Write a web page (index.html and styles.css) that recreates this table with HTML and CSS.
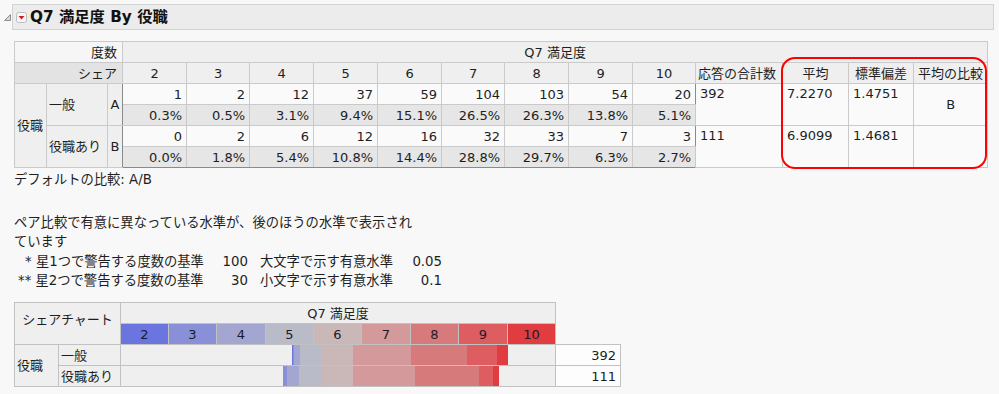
FILE: index.html
```html
<!DOCTYPE html>
<html lang="ja">
<head>
<meta charset="utf-8">
<title>Q7 満足度 By 役職</title>
<link rel="stylesheet" href="styles.css">
</head>
<body>
<div class="titlerow">
  <svg class="disc" width="9" height="9" viewBox="0 0 9 9"><polygon points="7.5,1.5 7.5,7.5 1.5,7.5" fill="#d6d6d6" stroke="#8e8e8e" stroke-width="1"/></svg>
  <div class="titlebox">
    <svg class="menu-icon" width="11" height="11" viewBox="0 0 11 11"><rect x="0.5" y="0.5" width="10" height="10" rx="2" fill="#f6f6f6" stroke="#bdbdbd"/><polygon points="2.5,4 8.5,4 5.5,7.5" fill="#e0141e"/></svg>
    <span class="title">Q7 満足度 By 役職</span>
  </div>
</div>

<div class="content">
  <div class="ct-wrap">
    <table class="ct">
      <colgroup>
        <col style="width:32px"><col style="width:61px"><col style="width:15px">
        <col style="width:64px"><col style="width:63px"><col style="width:64px"><col style="width:64px"><col style="width:64px"><col style="width:63px"><col style="width:64px"><col style="width:64px"><col style="width:63px">
        <col style="width:87px"><col style="width:66px"><col style="width:65px"><col style="width:74px">
      </colgroup>
      <tr>
        <td colspan="3" class="hl light">度数</td>
        <td colspan="13" class="span">Q7 満足度</td>
      </tr>
      <tr>
        <td colspan="3" class="hl dark">シェア</td>
        <td class="ch">2</td><td class="ch">3</td><td class="ch">4</td><td class="ch">5</td><td class="ch">6</td><td class="ch">7</td><td class="ch">8</td><td class="ch">9</td><td class="ch">10</td>
        <td class="ch lft">応答の合計数</td><td class="ch">平均</td><td class="ch">標準偏差</td><td class="ch">平均の比較</td>
      </tr>
      <tr>
        <td rowspan="4" class="rl">役職</td>
        <td rowspan="2" class="rl">一般</td>
        <td rowspan="2" class="rl ab">A</td>
        <td class="n cnt dl">1</td><td class="n cnt">2</td><td class="n cnt">12</td><td class="n cnt">37</td><td class="n cnt">59</td><td class="n cnt">104</td><td class="n cnt">103</td><td class="n cnt">54</td><td class="n cnt dr">20</td>
        <td rowspan="2" class="tl">392</td><td rowspan="2" class="tl">7.2270</td><td rowspan="2" class="tl">1.4751</td><td rowspan="2" class="mid">B</td>
      </tr>
      <tr>
        <td class="n pct dl">0.3%</td><td class="n pct">0.5%</td><td class="n pct">3.1%</td><td class="n pct">9.4%</td><td class="n pct">15.1%</td><td class="n pct">26.5%</td><td class="n pct">26.3%</td><td class="n pct">13.8%</td><td class="n pct dr">5.1%</td>
      </tr>
      <tr>
        <td rowspan="2" class="rl">役職あり</td>
        <td rowspan="2" class="rl ab">B</td>
        <td class="n cnt dl">0</td><td class="n cnt">2</td><td class="n cnt">6</td><td class="n cnt">12</td><td class="n cnt">16</td><td class="n cnt">32</td><td class="n cnt">33</td><td class="n cnt">7</td><td class="n cnt dr">3</td>
        <td rowspan="2" class="tl">111</td><td rowspan="2" class="tl">6.9099</td><td rowspan="2" class="tl">1.4681</td><td rowspan="2" class="mid"></td>
      </tr>
      <tr>
        <td class="n pct dl db">0.0%</td><td class="n pct db">1.8%</td><td class="n pct db">5.4%</td><td class="n pct db">10.8%</td><td class="n pct db">14.4%</td><td class="n pct db">28.8%</td><td class="n pct db">29.7%</td><td class="n pct db">6.3%</td><td class="n pct dr db">2.7%</td>
      </tr>
    </table>
    <div class="highlight"></div>
  </div>

  <p class="default">デフォルトの比較: A/B</p>
  <p class="pair">ペア比較で有意に異なっている水準が、後のほうの水準で表示され<br>ています</p>
  <div class="stars">
    <span class="s1">* 星1つで警告する度数の基準</span><span class="num">100</span><span class="lab">大文字で示す有意水準</span><span class="num">0.05</span>
    <span class="s2">** 星2つで警告する度数の基準</span><span class="num">30</span><span class="lab">小文字で示す有意水準</span><span class="num">0.1</span>
  </div>

  <table class="sc">
    <colgroup>
      <col style="width:44px"><col style="width:62px">
      <col style="width:48px"><col style="width:48px"><col style="width:49px"><col style="width:48px"><col style="width:48px"><col style="width:49px"><col style="width:48px"><col style="width:49px"><col style="width:48px">
      <col style="width:65px">
    </colgroup>
    <tr>
      <td colspan="2" rowspan="2" class="sct">シェアチャート</td>
      <td colspan="9" class="span">Q7 満足度</td>
      <td rowspan="2" class="blank"></td>
    </tr>
    <tr>
      <td class="lv c2">2</td><td class="lv c3">3</td><td class="lv c4">4</td><td class="lv c5">5</td><td class="lv c6">6</td><td class="lv c7">7</td><td class="lv c8">8</td><td class="lv c9">9</td><td class="lv c10">10</td>
    </tr>
    <tr>
      <td rowspan="2" class="rl">役職</td>
      <td class="rl">一般</td>
      <td colspan="9" class="barcell">
        <div class="track"><div class="bar" style="margin-left:171px">
          <span class="c2" style="width:0.3%"></span><span class="c3" style="width:0.5%"></span><span class="c4" style="width:3.1%"></span><span class="c5" style="width:9.4%"></span><span class="c6" style="width:15.1%"></span><span class="c7" style="width:26.5%"></span><span class="c8" style="width:26.3%"></span><span class="c9" style="width:13.8%"></span><span class="c10" style="width:5.0%"></span>
        </div></div>
      </td>
      <td class="tot">392</td>
    </tr>
    <tr>
      <td class="rl">役職あり</td>
      <td colspan="9" class="barcell">
        <div class="track"><div class="bar" style="margin-left:162px">
          <span class="c2" style="width:0%"></span><span class="c3" style="width:1.8%"></span><span class="c4" style="width:5.4%"></span><span class="c5" style="width:10.8%"></span><span class="c6" style="width:14.4%"></span><span class="c7" style="width:28.8%"></span><span class="c8" style="width:29.7%"></span><span class="c9" style="width:6.3%"></span><span class="c10" style="width:2.8%"></span>
        </div></div>
      </td>
      <td class="tot">111</td>
    </tr>
  </table>
</div>
</body>
</html>
```

FILE: styles.css
```css
* { box-sizing: border-box; }
html, body { margin: 0; padding: 0; }
body {
  width: 999px;
  height: 394px;
  overflow: hidden;
  background: #f8f8f8;
  color: #1e1e1e;
  font-family: "DejaVu Sans", "Noto Sans CJK JP", sans-serif;
  font-size: 13px;
}

/* title bar */
.titlerow {
  display: flex;
  align-items: center;
  padding: 4px 5px 0 3px;
}
.disc { flex: none; display: block; }
.titlebox {
  flex: 1;
  height: 26px;
  display: flex;
  align-items: center;
  gap: 3px;
  padding-left: 3px;
  background: #ececec;
  border: 1px solid #d3d3d3;
}
.menu-icon { flex: none; display: block; }
.title {
  font-weight: bold;
  font-size: 15.3px;
  line-height: 20px;
  color: #111;
}

.content { padding-left: 14px; }

/* main contingency table */
.ct-wrap {
  position: relative;
  width: 973px;
  margin-top: 11px;
}
.ct {
  border-collapse: collapse;
  table-layout: fixed;
  width: 973px;
}
.ct td {
  border: 1px solid #cacaca;
  height: 21px;
  padding: 0 4px;
  line-height: 19px;
  white-space: nowrap;
  overflow: hidden;
}
.ct .hl { text-align: right; padding-right: 5px; }
.ct .light { background: #f6f6f6; }
.ct .dark { background: #e3e3e3; }
.ct .span { background: #efefef; text-align: center; }
.ct .ch { background: #efefef; text-align: center; padding: 0 1px; }
.ct .ch.lft { text-align: left; padding-left: 2px; }
.ct .rl { background: #efefef; padding: 0 2px; }
.ct .ab { text-align: center; padding: 0; border-right-color: #8a8a8a; }
.ct .n { text-align: right; padding-right: 4px; }
.ct .cnt { background: #fafafa; }
.ct .pct { background: #e6e6e6; }
.ct .dl { border-left-color: #8a8a8a; }
.ct .dr { border-right-color: #8a8a8a; }
.ct .db { border-bottom-color: #8a8a8a; }
.ct .tl { background: #fafafa; vertical-align: top; padding-left: 4px; }
.ct .mid { background: #fafafa; text-align: center; }

.highlight {
  position: absolute;
  left: 767px;
  top: 16px;
  width: 206px;
  height: 112px;
  border: 2.5px solid #ff0000;
  border-radius: 14px;
  pointer-events: none;
}

/* notes */
.default, .pair {
  margin: 0;
  line-height: 19px;
  white-space: nowrap;
  font-size: 13.3px;
}
.default { margin-top: 2px; }
.pair { margin-top: 24px; }
.stars {
  display: grid;
  grid-template-columns: 196px 38px 142px 52px;
  line-height: 19px;
  margin-top: 1px;
  white-space: nowrap;
  font-size: 13.3px;
}
.stars .s1 { padding-left: 11px; }
.stars .s2 { padding-left: 4px; }
.stars .num { text-align: right; }
.stars .lab { padding-left: 12px; }

/* share chart */
.sc {
  border-collapse: collapse;
  table-layout: fixed;
  width: 606px;
  margin-top: 12px;
}
.sc td {
  border: 1px solid #c2c2c2;
  height: 21px;
  padding: 0 3px;
  line-height: 19px;
  white-space: nowrap;
}
.sc .sct { background: #efefef; text-align: center; vertical-align: middle; padding-bottom: 8px; }
.sc .span { background: #efefef; text-align: center; }
.sc .blank { border: none; background: transparent; }
.sc .lv { text-align: center; padding: 0; color: #1a1a2a; }
.sc .rl { background: #efefef; padding: 0 2px; }
.sc .barcell { padding: 0; background: #efefef; }
.sc .tot { background: #fdfdfd; text-align: right; padding-right: 4px; }
.track {
  height: 20px;
  display: flex;
}
.bar {
  display: flex;
  width: 216px;
  height: 100%;
}
.bar span { display: block; height: 100%; flex: none; }

.c2 { background: #6b75df; }
.c3 { background: #8a90d8; }
.c4 { background: #a3a6d0; }
.c5 { background: #babbc9; }
.c6 { background: #cab7b8; }
.c7 { background: #d49a9b; }
.c8 { background: #d77a7b; }
.c9 { background: #dd5d60; }
.c10 { background: #e13c40; }
```
